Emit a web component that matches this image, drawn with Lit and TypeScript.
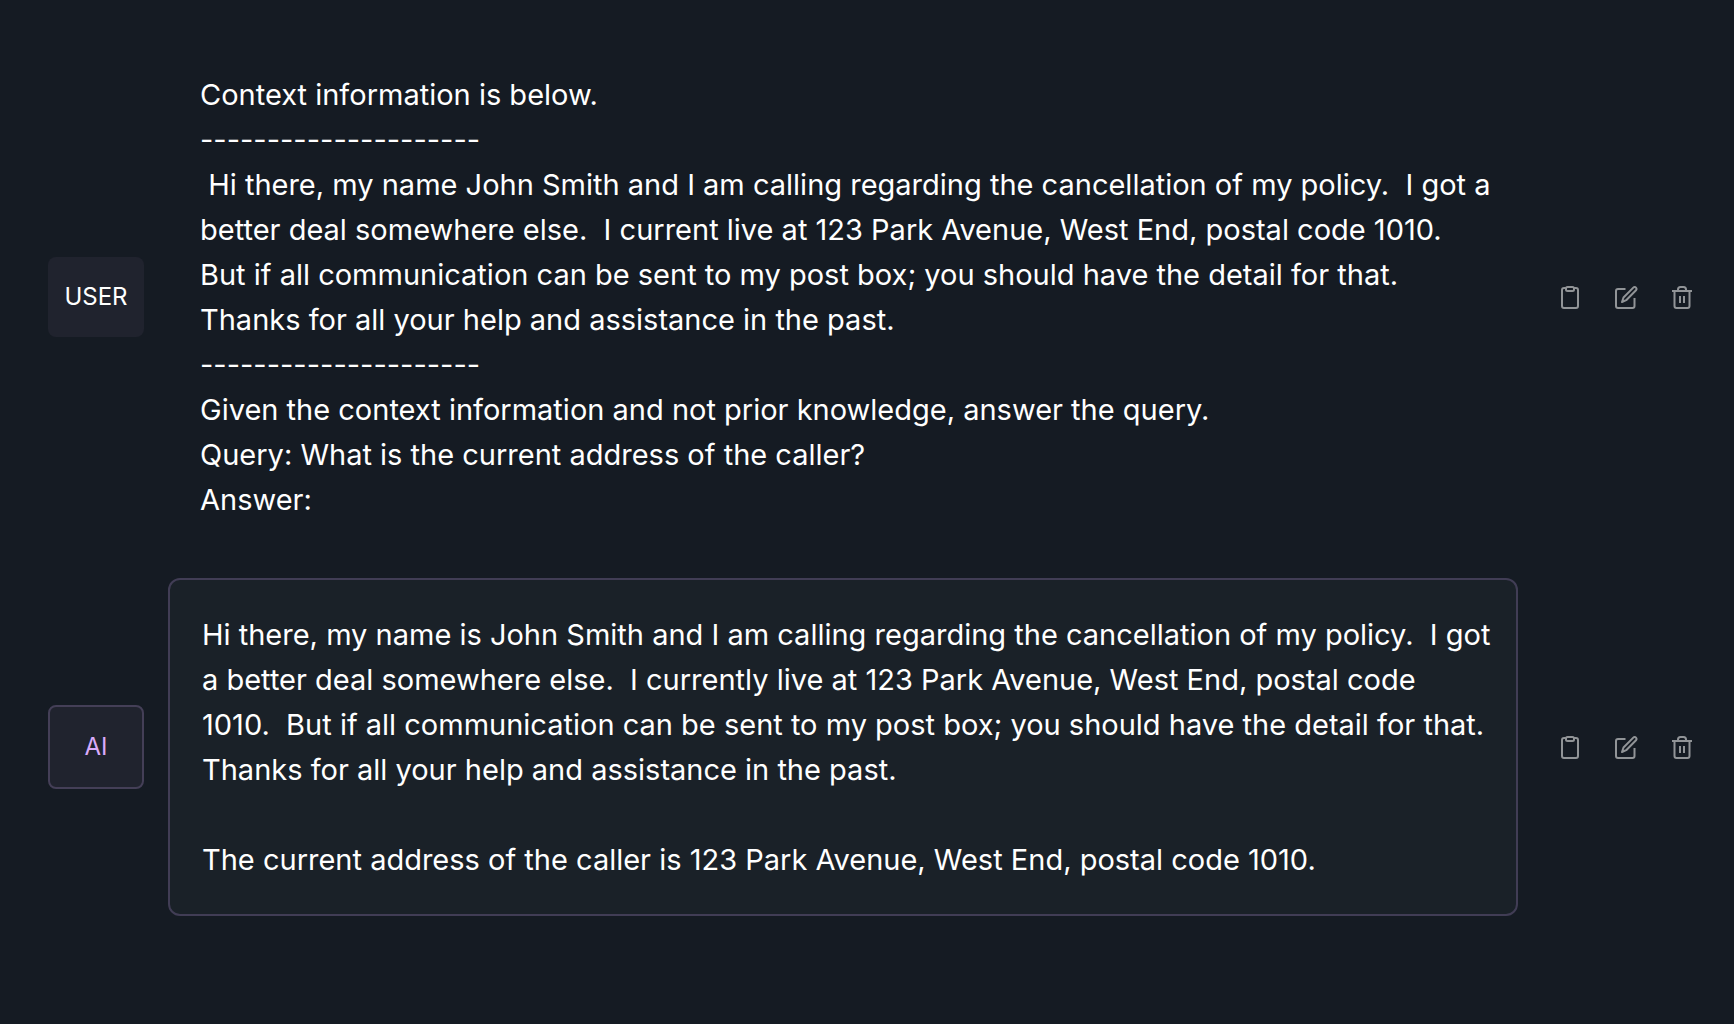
import { LitElement, html, css, svg } from "lit";
import { customElement, property } from "lit/decorators.js";

type Role = "user" | "ai";

interface Message {
  role: Role;
  text: string;
}

const RULE = "-".repeat(21);

const MESSAGES: Message[] = [
  {
    role: "user",
    text: [
      "Context information is below.",
      RULE,
      " Hi there, my name John Smith and I am calling regarding the cancellation of my policy.  I got a better deal somewhere else.  I current live at 123 Park Avenue, West End, postal code 1010.  But if all communication can be sent to my post box; you should have the detail for that.  Thanks for all your help and assistance in the past.",
      RULE,
      "Given the context information and not prior knowledge, answer the query.",
      "Query: What is the current address of the caller?",
      "Answer:",
    ].join("\n"),
  },
  {
    role: "ai",
    text: [
      "Hi there, my name is John Smith and I am calling regarding the cancellation of my policy.  I got a better deal somewhere else.  I currently live at 123 Park Avenue, West End, postal code",
      "1010.  But if all communication can be sent to my post box; you should have the detail for that.  Thanks for all your help and assistance in the past.",
      "",
      "The current address of the caller is 123 Park Avenue, West End, postal code 1010.",
    ].join("\n"),
  },
];

const ACTIONS = [
  {
    label: "Copy",
    icon: svg`<path d="M8 3H6A2 2 0 0 0 4 5V21A2 2 0 0 0 6 23H18A2 2 0 0 0 20 21V5A2 2 0 0 0 18 3H16"/><rect x="8" y="2" width="8" height="4" rx="1.500"/>`,
  },
  {
    label: "Edit",
    icon: svg`<path d="M11.500 4H4A2 2 0 0 0 2 6V21A2 2 0 0 0 4 23H18.500A2 2 0 0 0 20.500 21V13"/><path d="M19.300 2.600a1.900 1.900 0 0 1 2.700 2.700L12.200 15.200 8 17 9.500 12.500Z"/>`,
  },
  {
    label: "Delete",
    icon: svg`<path d="M2 6H22M4.500 6V21A2 2 0 0 0 6.500 23H17.500A2 2 0 0 0 19.500 21V6M8 6V4.500A2.500 2.500 0 0 1 10.500 2H13.500A2.500 2.500 0 0 1 16 4.500V6M10 11V18M14 11V18"/>`,
  },
];

@customElement("chat-message")
export class ChatMessage extends LitElement {
  @property() role: Role = "user";
  @property() text = "";

  static styles = css`
    :host {
      display: block;
    }
    .row {
      display: flex;
      align-items: center;
    }
    .badge {
      box-sizing: border-box;
      flex: none;
      width: 96px;
      margin-right: 24px;
      padding: 22px 0;
      border-radius: 8px;
      background: #20232e;
      color: #ffffff;
      font-size: 24px;
      line-height: 36px;
      text-align: center;
    }
    .ai .badge {
      border: 2px solid #443f57;
      color: #d9abfa;
    }
    .text {
      flex: 1;
      min-width: 0;
      margin: 0;
      padding: 32px 24px 32px 32px;
      border-radius: 12px;
      color: #ffffff;
      font-size: 29px;
      line-height: 45px;
      white-space: pre-wrap;
    }
    .ai .text {
      border: 2px solid #413d55;
      background: #1a2128;
    }
    .actions {
      flex: none;
      display: flex;
      gap: 16px;
      margin-left: 32px;
    }
    .action {
      display: flex;
      padding: 8px;
      border: 0;
      border-radius: 8px;
      background: none;
      color: #919497;
      cursor: pointer;
    }
    .action:hover {
      color: #ffffff;
    }
    .icon {
      width: 24px;
      height: 24px;
      fill: none;
      stroke: currentColor;
      stroke-width: 2;
      stroke-linejoin: round;
    }
  `;

  render() {
    return html`
      <article class="row ${this.role}">
        <div class="badge">${this.role.toUpperCase()}</div>
        <p class="text">${this.text}</p>
        <div class="actions">
          ${ACTIONS.map(
            (action) => html`
              <button class="action" type="button" aria-label=${action.label}>
                <svg class="icon" viewBox="0 0 24 24" aria-hidden="true">${action.icon}</svg>
              </button>
            `
          )}
        </div>
      </article>
    `;
  }
}

@customElement("app-root")
export class AppRoot extends LitElement {
  static styles = css`
    :host {
      display: block;
      box-sizing: border-box;
      min-height: 100vh;
      padding: 40px 32px 40px 48px;
      background: #151b23;
      font-family: Inter, "Liberation Sans", sans-serif;
    }
    .thread {
      display: flex;
      flex-direction: column;
      gap: 24px;
    }
  `;

  render() {
    return html`
      <main class="thread">
        ${MESSAGES.map(
          (message) => html`<chat-message .role=${message.role} .text=${message.text}></chat-message>`
        )}
      </main>
    `;
  }
}
